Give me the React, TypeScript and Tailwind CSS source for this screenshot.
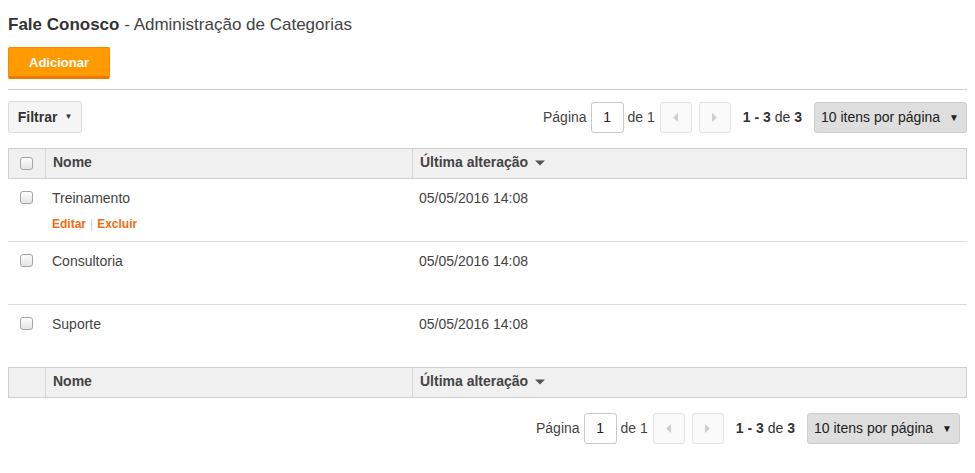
import React from "react";

const font = { fontFamily: '"Liberation Sans", Arial, sans-serif' };

function Checkbox() {
  return (
    <span className="inline-block h-[13px] w-[13px] rounded-[3px] border border-[#a6a6a6] bg-gradient-to-b from-[#fdfdfd] to-[#e4e4e4]" />
  );
}

function SortCaret() {
  return (
    <svg width="10" height="6" viewBox="0 0 10 6" className="ml-[7px] inline-block">
      <path d="M0 0.5 L10 0.5 L5 5.5 Z" fill="#555" />
    </svg>
  );
}

function Pager({ className }: { className?: string }) {
  return (
    <div className={"flex items-center text-[14px] text-[#444] " + (className ?? "")}>
      <span>Página</span>
      <div className="ml-[4px] flex h-[31px] w-[33px] items-center justify-center rounded-[3px] border border-[#c8c8c8] bg-white text-[#222]">
        1
      </div>
      <span className="ml-[4px]">de 1</span>
      <div className="ml-[5px] flex h-[31px] w-[32px] items-center justify-center rounded-[3px] border border-[#e2e2e2] bg-[#fafafa]">
        <svg width="5" height="9" viewBox="0 0 5 9">
          <path d="M5 0 L0 4.5 L5 9 Z" fill="#cfcfcf" />
        </svg>
      </div>
      <div className="ml-[7px] flex h-[31px] w-[32px] items-center justify-center rounded-[3px] border border-[#e2e2e2] bg-[#fafafa]">
        <svg width="5" height="9" viewBox="0 0 5 9">
          <path d="M0 0 L5 4.5 L0 9 Z" fill="#cfcfcf" />
        </svg>
      </div>
      <span className="ml-[12px] text-[#333]">
        <b>1 - 3</b> de <b>3</b>
      </span>
      <div className="ml-[12px] flex h-[31px] w-[153px] items-center justify-between rounded-[3px] border border-[#cdcdcd] bg-[#dedede] pl-[6px] pr-[7px] text-[#222]">
        <span>10 itens por página</span>
        <span className="text-[10px]">▼</span>
      </div>
    </div>
  );
}

function HeaderRow({ withCheckbox }: { withCheckbox: boolean }) {
  return (
    <div className="grid h-[31px] grid-cols-[37px_367px_1fr] border border-[#cfcfcf] bg-[#f0f0f0] text-[14px] font-bold text-[#444]">
      <div className="flex items-center border-r border-[#d6d6d6] pb-[1px] pl-[11px]">
        {withCheckbox && <Checkbox />}
      </div>
      <div className="flex items-center border-r border-[#d6d6d6] pb-[2px] pl-[7px]">Nome</div>
      <div className="flex items-center pb-[2px] pl-[7px]">
        Última alteração
        <SortCaret />
      </div>
    </div>
  );
}

function Row({ name, showActions, last }: { name: string; showActions: boolean; last?: boolean }) {
  return (
    <div
      className={
        "grid grid-cols-[38px_367px_1fr] text-[14px] text-[#444] " +
        (last ? "h-[62px]" : "h-[63px] border-b border-[#dddddd]")
      }
    >
      <div className="flex pl-[12px] pt-[12px]">
        <Checkbox />
      </div>
      <div className="pl-[6px] pt-[9px]">
        <div className="leading-[20px]">{name}</div>
        <div className={"mt-[8px] text-[12px] font-bold leading-[16px] " + (showActions ? "" : "invisible")}>
          <span className="text-[#f26b10]">Editar</span>
          <span className="mx-[4px] font-normal text-[#ccc]">|</span>
          <span className="text-[#f26b10]">Excluir</span>
        </div>
      </div>
      <div className="pl-[6px] pt-[9px] leading-[20px]">05/05/2016 14:08</div>
    </div>
  );
}

export default function App() {
  return (
    <div className="min-h-[473px] w-[975px] bg-white px-[8px] pt-[13px]" style={font}>
      <h1 className="text-[17px] leading-[24px] text-[#444]">
        <b className="text-[#333]">Fale Conosco</b> - Administração de Categorias
      </h1>
      <button className="mt-[10px] flex h-[32px] w-[102px] items-center justify-center rounded-[2px] border border-b-[3px] border-[#f58a00] border-b-[#f07800] bg-[#ff9a00] pt-[1px] text-[13px] font-bold text-white">
        Adicionar
      </button>
      <div className="mt-[10px] h-px bg-[#cccccc]" />
      <div className="mt-[11px] flex items-center justify-between">
        <div className="flex h-[32px] w-[74px] items-center justify-center rounded-[3px] border border-[#dcdcdc] bg-[#f5f5f5] text-[14px] font-bold text-[#333]">
          Filtrar
          <span className="ml-[7px] text-[8px]">▼</span>
        </div>
        <Pager />
      </div>
      <div className="mt-[15px]">
        <HeaderRow withCheckbox />
        <Row name="Treinamento" showActions />
        <Row name="Consultoria" showActions={false} />
        <Row name="Suporte" showActions={false} last />
        <HeaderRow withCheckbox={false} />
      </div>
      <div className="mt-[15px] flex justify-end pr-[7px]">
        <Pager />
      </div>
    </div>
  );
}
